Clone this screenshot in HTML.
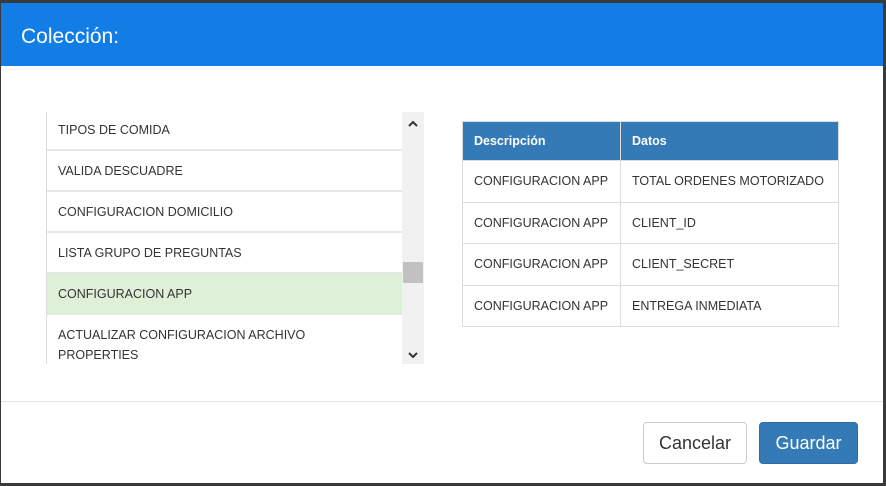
<!DOCTYPE html>
<html><head><style>
*{margin:0;padding:0;box-sizing:border-box}
body{width:886px;height:486px;background:#3a3a3a;font-family:"Liberation Sans",sans-serif;position:relative;overflow:hidden}
.modal{position:absolute;left:1px;top:3px;width:882px;height:480px;background:#fff}
.hdr{position:absolute;left:0;top:0;width:882px;height:63px;background:#137de6;color:#fff;font-size:21px;padding:22px 0 0 20px}
.list{position:absolute;left:45px;top:109px;width:356px;height:252px;overflow:hidden;border-left:1px solid #ddd}
.row{height:41px;border-bottom:2px solid #e6e6e6;font-size:12.5px;color:#333;padding:10px 60px 0 11px;line-height:20px}
.sb{position:absolute;left:401px;top:109px;width:22px;height:252px;background:#f1f1f1}
table{position:absolute;left:461px;top:118px;width:377px;border-collapse:collapse;font-size:12.5px;color:#333}
th{background:#337ab7;color:#fff;text-align:left;height:39px;padding-left:11px;border:1px solid #ddd;font-weight:bold}
td{height:41.5px;padding-left:11px;border:1px solid #ddd}
.line{position:absolute;left:0;top:398px;width:882px;height:1px;background:#e5e5e5}
.btn{position:absolute;top:419px;height:42px;border-radius:4px;font-size:18px;text-align:center;line-height:40px}
</style></head><body>
<div class="modal">
<div class="hdr">Colección:</div>
<div class="list">
<div class="row" style="height:39px;padding-top:8px">TIPOS DE COMIDA</div>
<div class="row">VALIDA DESCUADRE</div>
<div class="row">CONFIGURACION DOMICILIO</div>
<div class="row">LISTA GRUPO DE PREGUNTAS</div>
<div class="row" style="background:#dff0d8">CONFIGURACION APP</div>
<div class="row" style="height:60px;padding-top:10px">ACTUALIZAR CONFIGURACION ARCHIVO PROPERTIES</div>
</div>
<div class="sb">
<svg width="22" height="252" style="position:absolute;left:0;top:0"><path d="M7 14 L11 10 L15 14" stroke="#333" stroke-width="2" fill="none"/><path d="M7 241 L11 245 L15 241" stroke="#333" stroke-width="2" fill="none"/><rect x="1" y="150" width="20" height="21" fill="#c1c1c1"/></svg>
</div>
<table>
<tr><th style="width:158px">Descripción</th><th>Datos</th></tr>
<tr><td>CONFIGURACION APP</td><td>TOTAL ORDENES MOTORIZADO</td></tr>
<tr><td>CONFIGURACION APP</td><td>CLIENT_ID</td></tr>
<tr><td>CONFIGURACION APP</td><td>CLIENT_SECRET</td></tr>
<tr><td>CONFIGURACION APP</td><td>ENTREGA INMEDIATA</td></tr>
</table>
<div class="line"></div>
<div class="btn" style="left:642px;width:104px;border:1px solid #ccc;background:#fff;color:#333">Cancelar</div>
<div class="btn" style="left:758px;width:99px;background:#337ab7;border:1px solid #2e6da4;color:#fff">Guardar</div>
</div>
</body></html>
